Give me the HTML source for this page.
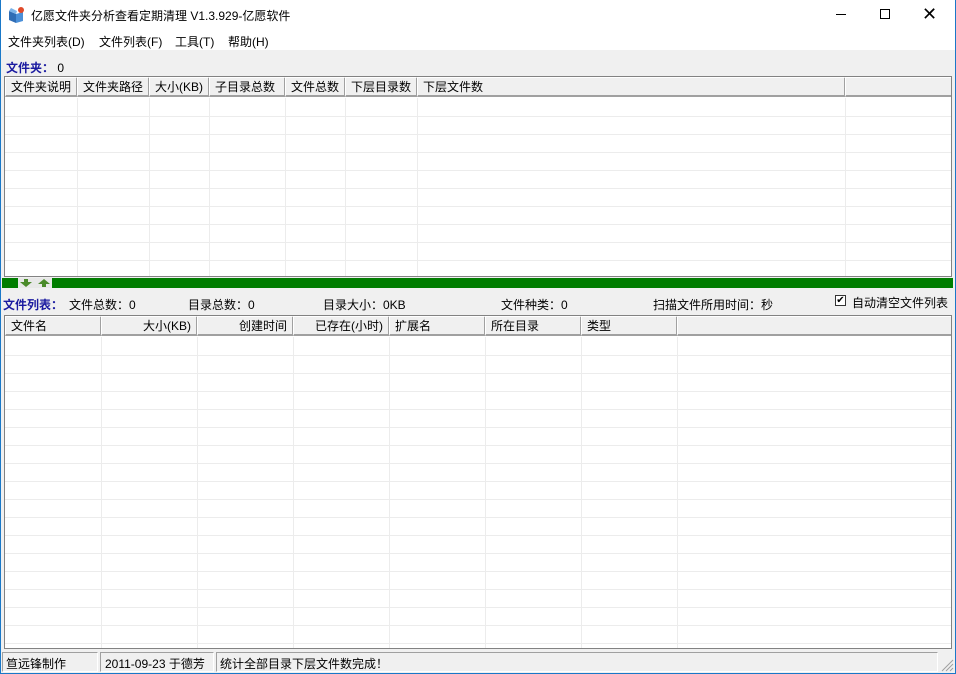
<!DOCTYPE html>
<html><head><meta charset="utf-8"><style>
*{margin:0;padding:0;box-sizing:border-box}
body{width:956px;height:674px;background:#f0f0f0;position:relative;overflow:hidden;font-family:"Liberation Sans","Noto Sans CJK SC",sans-serif;font-size:12px;color:#000}
.a{position:absolute;white-space:nowrap}
.grid{position:absolute;background:#fff;border:1px solid #828282;overflow:hidden}
.hd{position:absolute;top:0;height:20px;background:#f0f0f0;border-right:2px solid #a0a0a0;border-bottom:2px solid #a0a0a0;border-top:1px solid #fff;border-left:1px solid #fff;line-height:18px;padding:0 5px}
.vl{position:absolute;width:1px;background:#ececec}
.hl{position:absolute;height:1px;background:#ececec;left:0;right:0}
</style></head><body>
<div class="a" style="left:0;top:0;width:956px;height:674px;border:1px solid #1a78c8;border-top:none"></div>
<div class="a" style="left:1px;top:0;width:954px;height:30px;background:#fff"></div>
<div class="a" style="left:1px;top:30px;width:954px;height:20px;background:#fff"></div>
<svg class="a" style="left:8px;top:6px" width="18" height="18" viewBox="0 0 18 18"><path d="M1 5 L8 8 L8 17 L1 14Z" fill="#2f6db5"/><path d="M8 8 L15 6 L15 15 L8 17Z" fill="#4a8fd8"/><circle cx="13" cy="4" r="3" fill="#e04a2a"/><path d="M3 2 L9 5 L8 8 L1 5Z" fill="#7ab2e8"/></svg>
<div class="a" style="left:31px;top:7px;font-size:12px">亿愿文件夹分析查看定期清理 V1.3.929-亿愿软件</div>
<div class="a" style="left:836px;top:14px;width:10px;height:1px;background:#000"></div>
<div class="a" style="left:880px;top:9px;width:10px;height:10px;border:1px solid #000"></div>
<div class="a" style="left:922px;top:4px;font-size:18px;line-height:20px">✕</div>
<div class="a" style="left:8px;top:33px">文件夹列表(D)</div>
<div class="a" style="left:99px;top:33px">文件列表(F)</div>
<div class="a" style="left:175px;top:33px">工具(T)</div>
<div class="a" style="left:228px;top:33px">帮助(H)</div>
<div class="a" style="left:6px;top:59px;color:#1a1aa0;font-weight:bold">文件夹：<span style="color:#000;font-weight:normal">&nbsp;0</span></div>
<div class="grid" style="left:4px;top:76px;width:948px;height:201px">
<div class="hd" style="left:0;width:73px">文件夹说明</div>
<div class="hd" style="left:72px;width:73px">文件夹路径</div>
<div class="hd" style="left:144px;width:61px">大小(KB)</div>
<div class="hd" style="left:204px;width:77px">子目录总数</div>
<div class="hd" style="left:280px;width:61px">文件总数</div>
<div class="hd" style="left:340px;width:73px">下层目录数</div>
<div class="hd" style="left:412px;width:429px">下层文件数</div>
<div class="hd" style="left:840px;width:108px;border-right:none"></div>
<div class="vl" style="left:72px;top:21px;bottom:0"></div><div class="vl" style="left:144px;top:21px;bottom:0"></div><div class="vl" style="left:204px;top:21px;bottom:0"></div><div class="vl" style="left:280px;top:21px;bottom:0"></div><div class="vl" style="left:340px;top:21px;bottom:0"></div><div class="vl" style="left:412px;top:21px;bottom:0"></div><div class="vl" style="left:840px;top:21px;bottom:0"></div>
<div class="hl" style="top:39px"></div><div class="hl" style="top:57px"></div><div class="hl" style="top:75px"></div><div class="hl" style="top:93px"></div><div class="hl" style="top:111px"></div><div class="hl" style="top:129px"></div><div class="hl" style="top:147px"></div><div class="hl" style="top:165px"></div><div class="hl" style="top:183px"></div>
</div>
<div class="a" style="left:2px;top:278px;width:951px;height:10px;background:#007d00"></div>
<div class="a" style="left:18px;top:278px;width:34px;height:10px;background:#e8e8e8"></div>
<svg class="a" style="left:18px;top:278px" width="34" height="10"><path d="M2 4h4v-3h4v3h4l-6 5z" fill="#4a8a2a"/><path d="M20 6h4v3h4v-3h4l-6-5z" fill="#4a8a2a"/></svg>
<div class="a" style="left:3px;top:296px;color:#1a1aa0;font-weight:bold">文件列表：</div>
<div class="a" style="left:69px;top:296px">文件总数：0</div>
<div class="a" style="left:188px;top:296px">目录总数：0</div>
<div class="a" style="left:323px;top:296px">目录大小：0KB</div>
<div class="a" style="left:501px;top:296px">文件种类：0</div>
<div class="a" style="left:653px;top:296px">扫描文件所用时间：秒</div>
<div class="a" style="left:835px;top:295px;width:11px;height:11px;border:1px solid #333;background:#fff;font-size:10px;line-height:9px;text-align:center">✔</div>
<div class="a" style="left:852px;top:294px">自动清空文件列表</div>
<div class="grid" style="left:4px;top:315px;width:948px;height:334px">
<div class="hd" style="left:0;width:97px">文件名</div>
<div class="hd" style="left:96px;width:97px;text-align:right">大小(KB)</div>
<div class="hd" style="left:192px;width:97px;text-align:right">创建时间</div>
<div class="hd" style="left:288px;width:97px;text-align:right">已存在(小时)</div>
<div class="hd" style="left:384px;width:97px">扩展名</div>
<div class="hd" style="left:480px;width:97px">所在目录</div>
<div class="hd" style="left:576px;width:97px">类型</div>
<div class="hd" style="left:672px;width:276px;border-right:none"></div>
<div class="vl" style="left:96px;top:21px;bottom:0"></div><div class="vl" style="left:192px;top:21px;bottom:0"></div><div class="vl" style="left:288px;top:21px;bottom:0"></div><div class="vl" style="left:384px;top:21px;bottom:0"></div><div class="vl" style="left:480px;top:21px;bottom:0"></div><div class="vl" style="left:576px;top:21px;bottom:0"></div><div class="vl" style="left:672px;top:21px;bottom:0"></div>
<div class="hl" style="top:39px"></div><div class="hl" style="top:57px"></div><div class="hl" style="top:75px"></div><div class="hl" style="top:93px"></div><div class="hl" style="top:111px"></div><div class="hl" style="top:129px"></div><div class="hl" style="top:147px"></div><div class="hl" style="top:165px"></div><div class="hl" style="top:183px"></div><div class="hl" style="top:201px"></div><div class="hl" style="top:219px"></div><div class="hl" style="top:237px"></div><div class="hl" style="top:255px"></div><div class="hl" style="top:273px"></div><div class="hl" style="top:291px"></div><div class="hl" style="top:309px"></div><div class="hl" style="top:327px"></div>
</div>
<div class="a" style="left:2px;top:652px;width:96px;height:20px;border:1px solid;border-color:#a0a0a0 #fff #fff #a0a0a0"></div>
<div class="a" style="left:100px;top:652px;width:114px;height:20px;border:1px solid;border-color:#a0a0a0 #fff #fff #a0a0a0"></div>
<div class="a" style="left:216px;top:652px;width:722px;height:20px;border:1px solid;border-color:#a0a0a0 #fff #fff #a0a0a0"></div>
<div class="a" style="left:6px;top:655px">笪远锋制作</div>
<div class="a" style="left:105px;top:655px">2011-09-23 于德芳</div>
<div class="a" style="left:220px;top:655px">统计全部目录下层文件数完成！</div>
<svg class="a" style="left:940px;top:658px" width="14" height="14"><path d="M13 2L2 13M13 6L6 13M13 10L10 13" stroke="#a0a0a0"/></svg>
</body></html>
